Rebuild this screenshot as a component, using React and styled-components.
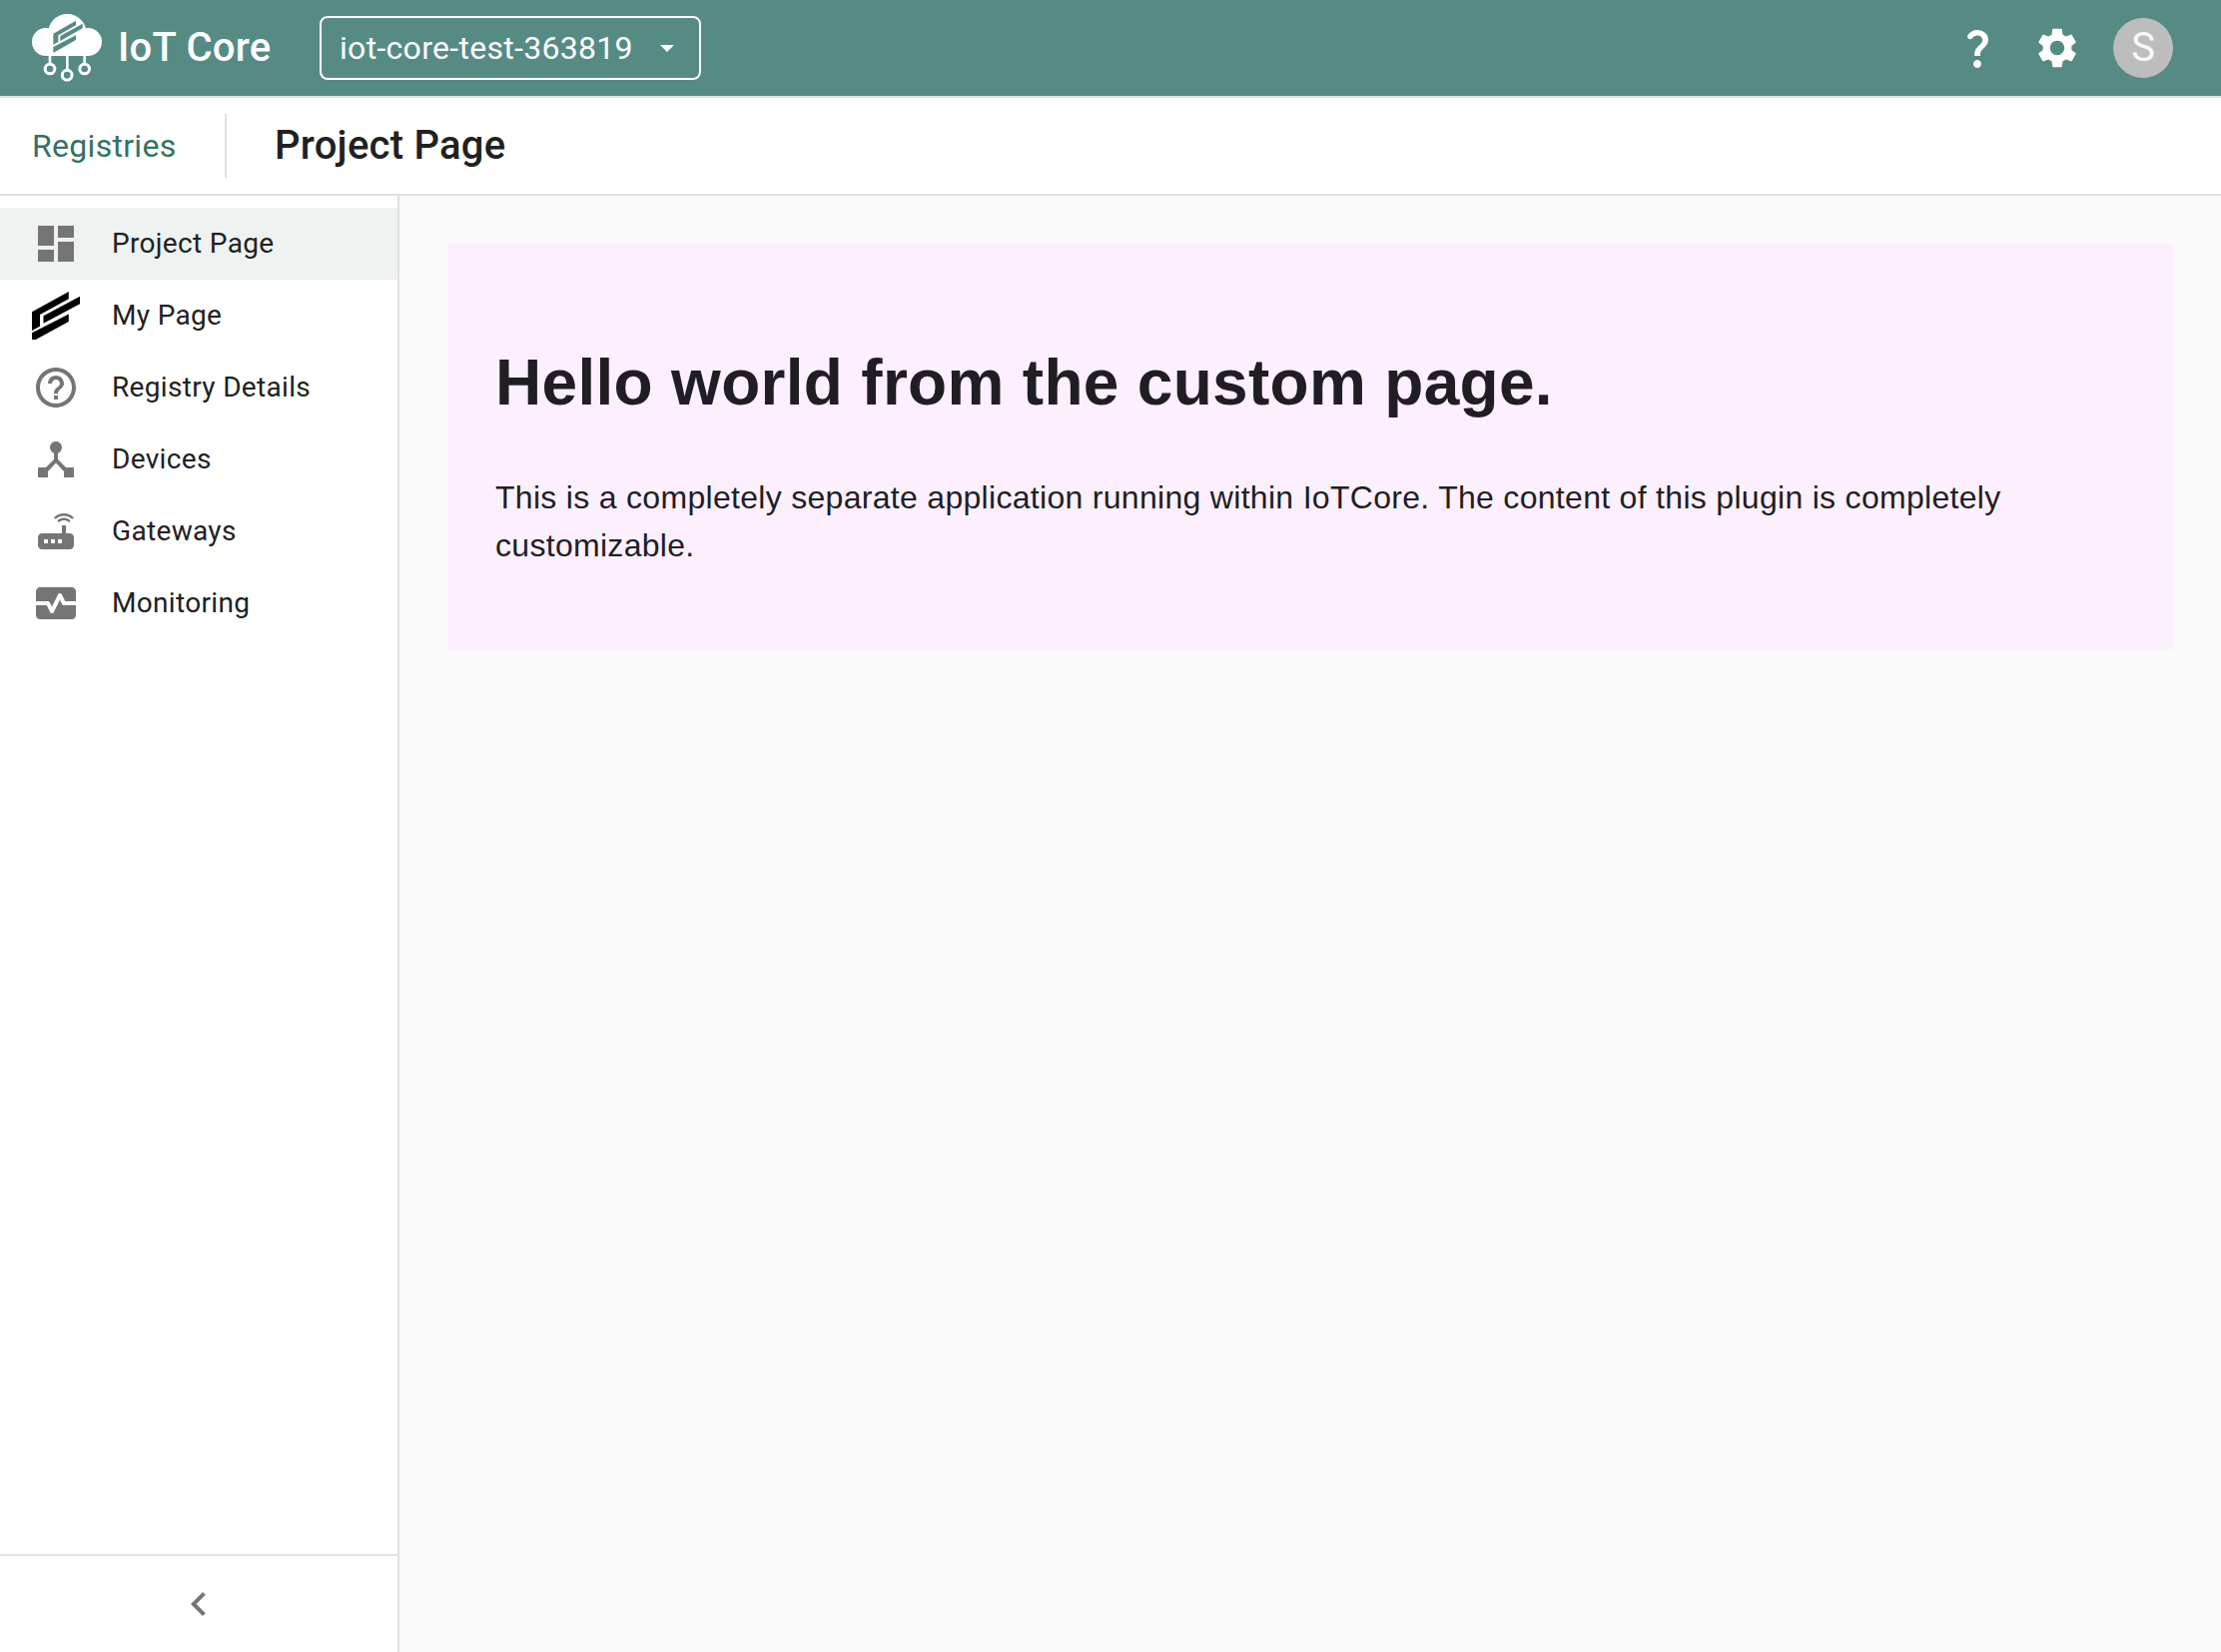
import React from "react";
import styled, { createGlobalStyle } from "styled-components";
import {
  MdChevronLeft,
  MdDashboard,
  MdDeviceHub,
  MdHelpOutline,
  MdMonitorHeart,
  MdRouter,
  MdSettings,
} from "react-icons/md";

const menuItems = [
  { label: "Project Page", icon: <MdDashboard />, active: true },
  { label: "My Page", icon: <BrandMark /> },
  { label: "Registry Details", icon: <MdHelpOutline /> },
  { label: "Devices", icon: <MdDeviceHub /> },
  { label: "Gateways", icon: <MdRouter /> },
  { label: "Monitoring", icon: <MdMonitorHeart /> },
];

function BrandMark() {
  return (
    <svg viewBox="0 0 48 48" fill="#000">
      <path d="M0 20.2 36.8 0v7.2L8 22.9v11.9l-8 4.1z" />
      <path d="M11.5 24.2 48 4.7v7.5L11.5 31.8z" />
      <path d="M0 41.2 36.8 22.5v7.4L3.8 48H0z" />
    </svg>
  );
}

function CloudLogo() {
  return (
    <CloudSvg viewBox="90 36 222 216">
      <g fill="#fff">
        <circle cx="138" cy="126" r="42" />
        <circle cx="264" cy="126" r="42" />
        <circle cx="202" cy="100" r="58" />
        <rect x="138" y="110" width="126" height="58" />
      </g>
      <g fill="#568b84">
        <path d="M160 101 228 62v14l-53 30v20l-15 8z" />
        <path d="M181 108 248 71v14l-67 38z" />
        <path d="M160 141 228 106v14l-68 39z" />
      </g>
      <g fill="none" stroke="#fff" strokeWidth="8">
        <path d="M150 166v26M202 166v44M254 166v26" />
        <circle cx="150" cy="207" r="14.5" strokeWidth="9" />
        <circle cx="201.500" cy="225.500" r="14.5" strokeWidth="9" />
        <circle cx="254" cy="207" r="14.5" strokeWidth="9" />
      </g>
    </CloudSvg>
  );
}

function QuestionIcon() {
  return (
    <svg viewBox="0 0 24 24" fill="currentColor">
      <path d="M7.92 7.54c-.8-.34-1.14-1.33-.66-2.05C8.23 4.05 9.85 3 11.99 3c2.35 0 3.96 1.07 4.78 2.41.7 1.15 1.11 3.3.03 4.9-1.2 1.77-2.35 2.31-2.97 3.45-.25.46-.35.76-.35 2.24h-2.89c-.01-.78-.13-2.05.48-3.15.77-1.39 2.25-2.21 3.11-3.44.91-1.29.4-3.7-2.18-3.7-1.04 0-1.76.49-2.22 1.13-.37.54-1.13.99-1.86.7zM14 20c0 1.1-.9 2-2 2s-2-.9-2-2 .9-2 2-2 2 .9 2 2z" />
    </svg>
  );
}

const App = () => {
  return (
    <Page>
      <GlobalStyle />
      <TopBar>
        <CloudLogo />
        <Brand>IoT Core</Brand>
        <ProjectSelect>
          iot-core-test-363819
          <Caret viewBox="0 0 14 7">
            <path d="M0 0h14L7 7z" fill="#fff" />
          </Caret>
        </ProjectSelect>
        <Actions>
          <IconButton>
            <QuestionIcon />
          </IconButton>
          <IconButton>
            <MdSettings />
          </IconButton>
          <Avatar>S</Avatar>
        </Actions>
      </TopBar>
      <SubBar>
        <RegistriesLink>Registries</RegistriesLink>
        <Title>Project Page</Title>
      </SubBar>
      <Body>
        <Sidebar>
          <Menu>
            {menuItems.map((item) => (
              <MenuItem key={item.label} $active={item.active}>
                <MenuIcon>{item.icon}</MenuIcon>
                <MenuLabel>{item.label}</MenuLabel>
              </MenuItem>
            ))}
          </Menu>
          <CollapseButton>
            <MdChevronLeft />
          </CollapseButton>
        </Sidebar>
        <Content>
          <Panel>
            <PanelTitle>Hello world from the custom page.</PanelTitle>
            <PanelText>
              This is a completely separate application running within IoTCore.
              The content of this plugin is completely customizable.
            </PanelText>
          </Panel>
        </Content>
      </Body>
    </Page>
  );
};

export default App;

const GlobalStyle = createGlobalStyle`
  * {
    box-sizing: border-box;
  }

  body {
    margin: 0;
    color: #212121;
    font-family: Roboto, sans-serif;
  }
`;

const Page = styled.div`
  display: flex;
  flex-direction: column;
  width: 100%;
  height: 100vh;
  overflow: hidden;
`;

const TopBar = styled.header`
  display: flex;
  align-items: center;
  flex-shrink: 0;
  height: 98px;
  padding: 0 48px 0 30px;
  border-bottom: 2px solid #e0e0e0;
  background-color: #568b84;
  color: #fff;
`;

const CloudSvg = styled.svg`
  width: 74px;
  height: 72px;
`;

const Brand = styled.div`
  width: 202px;
  margin-left: 14px;
  padding-bottom: 1px;
  font-size: 40px;
  font-weight: 500;
  letter-spacing: 0.25px;
  white-space: nowrap;
`;

const ProjectSelect = styled.div`
  display: flex;
  align-items: center;
  justify-content: space-between;
  width: 382px;
  height: 64px;
  padding: 0 25px 0 18px;
  border: 2px solid #fff;
  border-radius: 8px;
  font-size: 32px;
  letter-spacing: 0.3px;
  white-space: nowrap;
`;

const Caret = styled.svg`
  width: 14px;
  height: 7px;
`;

const Actions = styled.div`
  display: flex;
  align-items: center;
  gap: 32px;
  margin-left: auto;
`;

const IconButton = styled.div`
  width: 48px;
  height: 48px;

  svg {
    display: block;
    width: 48px;
    height: 48px;
  }
`;

const Avatar = styled.div`
  display: flex;
  align-items: center;
  justify-content: center;
  width: 60px;
  height: 60px;
  padding-bottom: 1px;
  border-radius: 50%;
  background-color: #bdbdbd;
  color: #fafafa;
  font-size: 40px;
`;

const SubBar = styled.div`
  display: flex;
  align-items: center;
  flex-shrink: 0;
  height: 98px;
  border-bottom: 2px solid #e0e0e0;
  background-color: #fff;
`;

const RegistriesLink = styled.div`
  display: flex;
  align-items: center;
  width: 227px;
  height: 64px;
  padding-left: 32px;
  border-right: 2px solid #e0e0e0;
  color: #357067;
  font-size: 32px;
  letter-spacing: 0.3px;
`;

const Title = styled.div`
  margin-left: 48px;
  padding-bottom: 2px;
  font-size: 40px;
  font-weight: 500;
  letter-spacing: 0.25px;
`;

const Body = styled.div`
  display: flex;
  flex: 1;
  min-height: 0;
`;

const Sidebar = styled.nav`
  display: flex;
  flex-direction: column;
  flex-shrink: 0;
  width: 400px;
  border-right: 2px solid #e0e0e0;
  background-color: #fff;
`;

const Menu = styled.div`
  flex: 1;
  padding-top: 12px;
`;

const MenuItem = styled.div`
  display: flex;
  align-items: center;
  gap: 32px;
  height: 72px;
  padding-left: 32px;
  background-color: ${({ $active }) => ($active ? "#eef2f1" : "transparent")};
`;

const MenuIcon = styled.div`
  width: 48px;
  height: 48px;
  color: #757575;

  svg {
    display: block;
    width: 48px;
    height: 48px;
  }
`;

const MenuLabel = styled.span`
  padding-bottom: 2px;
  font-size: 28px;
  letter-spacing: 0.33px;
`;

const CollapseButton = styled.div`
  display: flex;
  align-items: center;
  justify-content: center;
  height: 98px;
  border-top: 2px solid #e0e0e0;
  color: #757575;
  font-size: 48px;
`;

const Content = styled.main`
  flex: 1;
  padding: 48px;
  background-color: #fafafa;
`;

const Panel = styled.section`
  height: 406px;
  padding: 91px 48px 0;
  background-color: #fcf0fe;
  color: #201e22;
  font-family: "Liberation Sans", Arial, sans-serif;
`;

const PanelTitle = styled.h1`
  margin: 0 0 43px;
  font-size: 64px;
  font-weight: 700;
  line-height: 96px;
  letter-spacing: 0.3px;
`;

const PanelText = styled.p`
  margin: 0;
  font-size: 32px;
  line-height: 48px;
  letter-spacing: 0.3px;
`;
